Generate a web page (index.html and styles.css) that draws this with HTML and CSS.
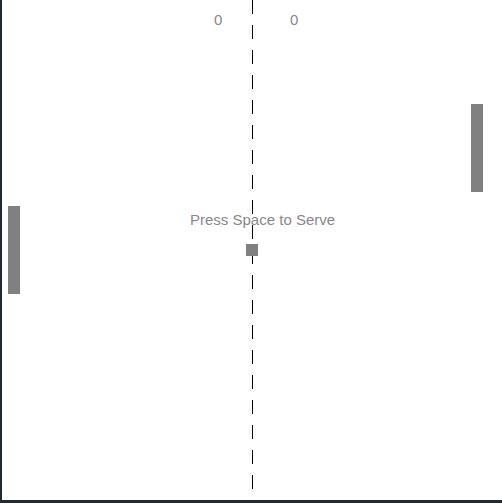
FILE: index.html
```html
<!DOCTYPE html>
<html>
<head>
<meta charset="utf-8">
<link rel="stylesheet" href="styles.css">
</head>
<body>
<div class="court">
  <div class="net"></div>
  <div class="score score-left">0</div>
  <div class="score score-right">0</div>
  <div class="paddle paddle-left"></div>
  <div class="paddle paddle-right"></div>
  <div class="message">Press Space to Serve</div>
  <div class="ball"></div>
</div>
</body>
</html>
```
FILE: styles.css
```css
html, body {
  margin: 0;
  padding: 0;
  background: #1f2a33;
  height: 100%;
  overflow: hidden;
}
.court {
  position: relative;
  margin-left: 2px;
  width: 500px;
  height: 500px;
  background: #ffffff;
  font-family: "Liberation Sans", Arial, sans-serif;
  font-size: 15px;
  line-height: 15px;
  color: #888888;
}
.net {
  position: absolute;
  left: 250px;
  top: 0;
  width: 1px;
  height: 500px;
  background: repeating-linear-gradient(to bottom, #000 0, #000 14px, transparent 14px, transparent 25px);
}
.score {
  position: absolute;
  top: 12px;
}
.score-left { left: 212px; }
.score-right { left: 288px; }
.paddle {
  position: absolute;
  width: 12px;
  height: 88px;
  background: #808080;
}
.paddle-left { left: 6px; top: 206px; }
.paddle-right { left: 469px; top: 104px; }
.ball {
  position: absolute;
  left: 244px;
  top: 244px;
  width: 12px;
  height: 12px;
  background: #808080;
}
.message {
  position: absolute;
  left: 188px;
  top: 212px;
  white-space: nowrap;
}
```
